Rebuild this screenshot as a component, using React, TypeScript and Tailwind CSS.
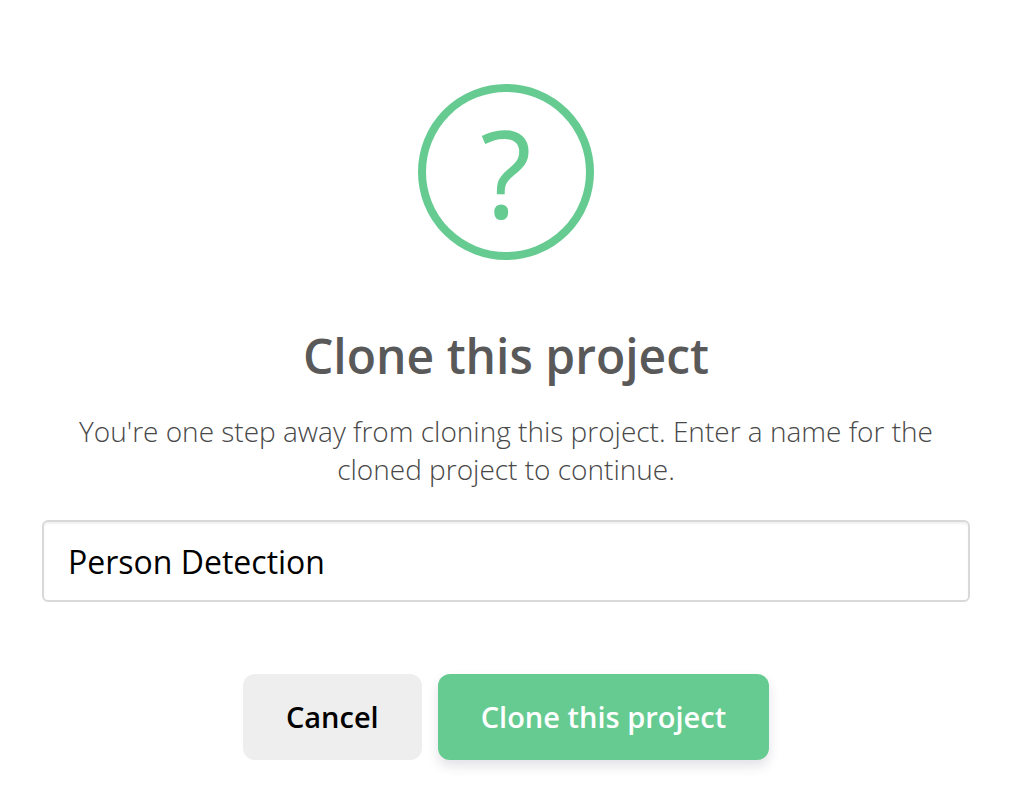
import { useState } from 'react';

export default function App() {
  const [name, setName] = useState('Person Detection');

  return (
    <main className="min-h-screen bg-white pt-[84px] pr-11 pb-10 pl-[42px] font-['Open_Sans',sans-serif]">
      <form
        role="dialog"
        aria-labelledby="clone-title"
        aria-describedby="clone-description"
        className="flex flex-col items-center"
        onSubmit={(event) => event.preventDefault()}
      >
        <div
          aria-hidden="true"
          className="flex size-44 items-center justify-center rounded-full border-8 border-[#66cb91] text-[120px] leading-none text-[#66cb91]"
        >
          ?
        </div>
        <h2 id="clone-title" className="mt-16 text-center text-5xl leading-16 font-semibold text-[#595959]">
          Clone this project
        </h2>
        <label
          id="clone-description"
          htmlFor="project-name"
          className="mt-6 px-8 text-center text-[28px] leading-[38px] font-light text-[#484848]"
        >
          You're one step away from cloning this project. Enter a name for the cloned project to continue.
        </label>
        <input
          id="project-name"
          type="text"
          value={name}
          onChange={(event) => setName(event.target.value)}
          className="mt-8 h-[82px] w-full rounded-md border-2 border-[#d9d9d9] px-6 text-[32px] text-black shadow-[inset_0_2px_2px_rgba(0,0,0,0.06)] outline-none"
        />
        <div className="mt-18 flex gap-4">
          <button type="button" className="h-[86px] rounded-xl bg-[#eeeeee] px-[43px] text-[29px] font-semibold text-black">
            Cancel
          </button>
          <button
            type="submit"
            className="h-[86px] rounded-xl bg-[#66cb91] px-[43px] text-[29px] font-semibold text-white shadow-[0_6px_12px_rgba(50,50,93,0.14)]"
          >
            Clone this project
          </button>
        </div>
      </form>
    </main>
  );
}
